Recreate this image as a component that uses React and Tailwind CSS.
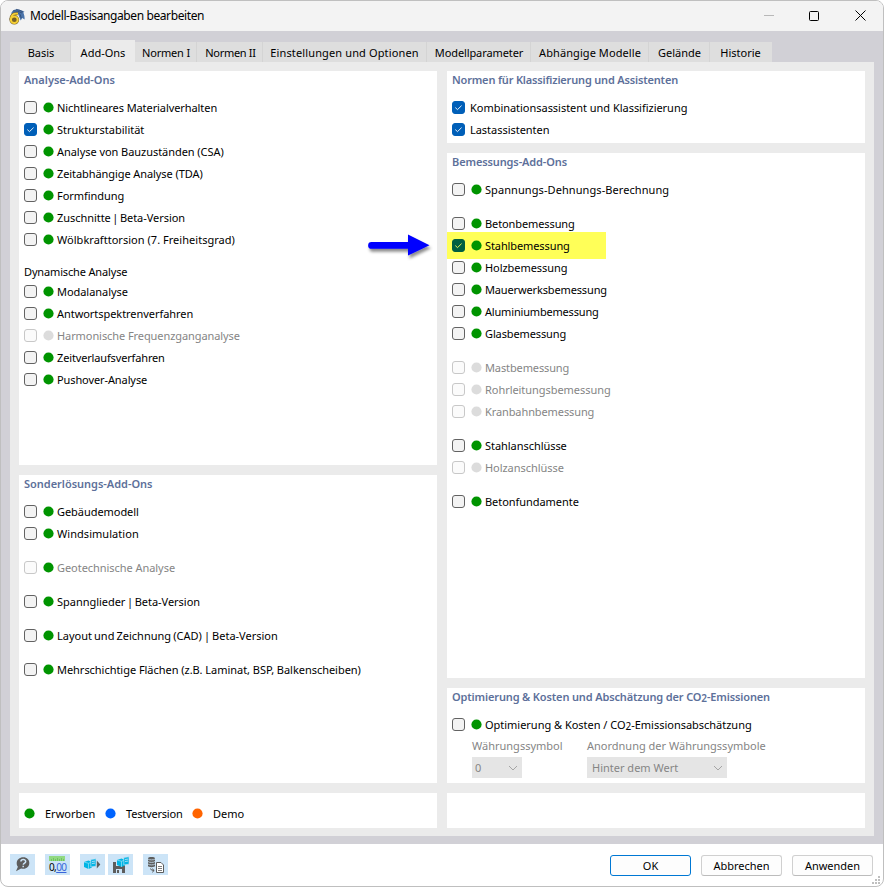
import React from "react";

const analysis = [
  { label: "Nichtlineares Materialverhalten", spacing: "tracking-[-0.08px]" },
  { label: "Strukturstabilität", checked: true, spacing: "tracking-[0px]" },
  { label: "Analyse von Bauzuständen (CSA)" },
  { label: "Zeitabhängige Analyse (TDA)", spacing: "tracking-[-0.08px]" },
  { label: "Formfindung" },
  { label: "Zuschnitte | Beta-Version", spacing: "tracking-[-0.05px] [word-spacing:-1.2px]" },
  { label: "Wölbkrafttorsion (7. Freiheitsgrad)", spacing: "tracking-[0.03px]" },
];

const dynamic = [
  { label: "Modalanalyse" },
  { label: "Antwortspektrenverfahren" },
  {
    label: "Harmonische Frequenzganganalyse",
    disabled: true,
    spacing: "tracking-[-0.08px]",
  },
  { label: "Zeitverlaufsverfahren", spacing: "tracking-[-0.15px]" },
  { label: "Pushover-Analyse", spacing: "tracking-[-0.1px]" },
];

const special = [
  { label: "Gebäudemodell" },
  { label: "Windsimulation", spacing: "tracking-[0.05px]" },
  { label: "Geotechnische Analyse", disabled: true, owned: true, gap: true },
  {
    label: "Spannglieder | Beta-Version",
    gap: true,
    spacing: "tracking-[-0.03px] [word-spacing:-1.2px]",
  },
  {
    label: "Layout und Zeichnung (CAD) | Beta-Version",
    gap: true,
    spacing: "tracking-[-0.01px] [word-spacing:-0.7px]",
  },
  {
    label: "Mehrschichtige Flächen (z.B. Laminat, BSP, Balkenscheiben)",
    gap: true,
    spacing: "tracking-[-0.035px]",
  },
];

const design = [
  { label: "Spannungs-Dehnungs-Berechnung", spacing: "tracking-[0.08px]" },
  { label: "Betonbemessung", gap: true, spacing: "tracking-[-0.1px]" },
  { label: "Stahlbemessung", checked: true, highlight: true, spacing: "tracking-[-0.1px]" },
  { label: "Holzbemessung" },
  { label: "Mauerwerksbemessung", spacing: "tracking-[-0.14px]" },
  { label: "Aluminiumbemessung", spacing: "tracking-[-0.18px]" },
  { label: "Glasbemessung", spacing: "tracking-[-0.12px]" },
  { label: "Mastbemessung", disabled: true, gap: true, spacing: "tracking-[-0.12px]" },
  { label: "Rohrleitungsbemessung", disabled: true },
  { label: "Kranbahnbemessung", disabled: true, spacing: "tracking-[-0.1px]" },
  { label: "Stahlanschlüsse", gap: true },
  { label: "Holzanschlüsse", disabled: true },
  { label: "Betonfundamente", gap: true },
];

const tabs = [
  { label: "Basis", width: "w-[61px] pl-[2px]" },
  { label: "Add-Ons", width: "w-[64px]", active: true },
  { label: "Normen I", width: "w-[62px] pl-px tracking-[-0.2px]" },
  { label: "Normen II", width: "w-[66px] pl-[2px] tracking-[-0.3px]" },
  { label: "Einstellungen und Optionen", width: "w-[164px] tracking-[0.13px]" },
  { label: "Modellparameter", width: "w-[104px] pl-px tracking-[-0.1px]" },
  { label: "Abhängige Modelle", width: "w-[118px] pl-px tracking-[0.08px]" },
  { label: "Gelände", width: "w-[61px] pl-px" },
  { label: "Historie", width: "w-[62px] border-r-0 pr-px" },
];

const Checkbox = ({ checked, disabled, highlight }) => {
  let color = "border-[#626262] bg-[#f3f3f3]";
  if (disabled) color = "border-[#c8c8c8] bg-[#fbfbfb]";
  if (checked) color = "border-[#005fb8] bg-[#005fb8]";
  if (highlight) color = "border-[#005f41] bg-[#005f41]";
  return (
    <span className={`block size-[13px] shrink-0 rounded-[3px] border ${color}`}>
      {checked && (
        <svg viewBox="0 0 11 11" className="block size-[11px]" fill="none">
          <path
            d="M2.3 5.6 4.5 7.6 8.600 3.600"
            stroke={highlight ? "#ffff58" : "#fff"}
            strokeWidth=".9"
          />
        </svg>
      )}
    </span>
  );
};

const Dot = ({ color = "#009400" }) => (
  <svg className="block size-[11px] shrink-0" viewBox="0 0 11 11">
    <circle cx="5.5" cy="5.5" r="5.1" fill={color} />
  </svg>
);

const AddOn = ({
  label,
  checked,
  disabled,
  owned,
  gap,
  highlight,
  spacing = "tracking-[-0.05px]",
}) => (
  <div className={`relative flex h-[22px] items-center pl-[5px] ${gap ? "mt-3" : ""}`}>
    {highlight && (
      <span className="absolute top-[-2px] left-0 h-[27px] w-[159px] bg-[#ffff58]" />
    )}
    <div className="relative flex items-center">
      <Checkbox checked={checked} disabled={disabled} highlight={highlight} />
      <span className="ml-[6px]">
        <Dot color={disabled && !owned ? "#dcdcdc" : "#009400"} />
      </span>
      <span
        className={`ml-[3px] pt-px whitespace-nowrap ${spacing} ${
          disabled ? "text-[#858585]" : ""
        }`}
      >
        {label}
      </span>
    </div>
    {highlight && (
      <svg className="absolute top-[-1px] left-[-82px] h-[36px] w-[68px]" viewBox="0 0 68 36">
        <defs>
          <filter id="arrowShadow" x="-20%" y="-20%" width="140%" height="160%">
            <feDropShadow dx="1.5" dy="3" stdDeviation="1.6" floodOpacity="0.45" />
          </filter>
        </defs>
        <path
          d="M6.5 9H43V1.5L64.500 12.200 43 22.500V15.800H6.500A3.400 3.400 0 0 1 6.500 9Z"
          fill="#0000ff"
          filter="url(#arrowShadow)"
        />
      </svg>
    )}
  </div>
);

const Panel = ({ title, className, spacing = "tracking-[-0.02px]", children }) => (
  <section className={`bg-white ${className}`}>
    {title && (
      <h2
        className={`h-[25px] pl-[5px] text-[11px] leading-[18px] font-semibold whitespace-nowrap text-[#5d709a] ${spacing}`}
      >
        {title}
      </h2>
    )}
    {children}
  </section>
);

const Select = ({ value, className }) => (
  <div
    className={`flex h-[21px] items-center justify-between bg-[#e5e5e5] pr-[4px] text-[#858585] ${className}`}
  >
    <span>{value}</span>
    <svg width="10" height="6" viewBox="0 0 10 6" fill="none" stroke="#a5a5a5">
      <path d="M1 1l4 4 4-4" />
    </svg>
  </div>
);

const Co2 = () => (
  <>
    CO<span className="relative top-px text-[10px]">2</span>
  </>
);

const ToolButton = ({ className = "", children }) => (
  <button className={`flex h-[21px] w-[25px] items-center justify-center bg-[#cce4f7] ${className}`}>
    {children}
  </button>
);

const HelpIcon = () => (
  <svg width="17" height="17" viewBox="0 0 17 17">
    <path
      d="M9.300 1.300C13 1.300 15.300 3.800 15.300 7s-2.300 5.800-6 5.800c-.8 0-1.500-.1-2.200-.4L2 15.300l1.900-4.600C3 9.700 2.700 8.600 2.700 7.300c0-3.500 2.900-6 6.600-6Z"
      fill="#5d5d5d"
    />
    <path
      d="M6.900 5.600C6.900 2.900 11.700 3 11.700 5.500 11.700 7.100 9.400 7 9.300 8.800M9.200 9.800v1.500"
      fill="none"
      stroke="#cce4f7"
      strokeWidth="1.500"
    />
  </svg>
);

const UnitsIcon = () => (
  <span className="flex w-[17px] flex-col">
    <svg width="16" height="5" viewBox="0 0 16 5">
      <path d="M0 0h16v5H0Z" fill="#91d982" />
      <path
        d="M2.500 3v2M4.500 2v3M6.500 3v2M8.500 2v3M10.500 3v2M12.500 2v3M14.500 3v2"
        stroke="#62b954"
        strokeWidth=".7"
      />
    </svg>
    <span className="flex font-['Noto_Sans',sans-serif] text-[10px] leading-[12px] tracking-[-0.6px] text-black">
      0,<span className="text-[#3865da] underline">00</span>
    </span>
  </span>
);

const Cube = () => (
  <>
    <path d="M0 4 4.500 2.500 8 4v5.500L4.500 11 0 9Z" fill="#00b5e5" />
    <path d="M0 4l4.500 1.300L8 4M4.500 5.300V11" fill="none" stroke="#9be2f7" strokeWidth=".7" />
    <path d="M6.800 1.500 12 .8v7.400l-5.200.8Z" fill="#00b5e5" stroke="#cce4f7" strokeWidth=".6" />
    <path d="M8 3.500l3-.4M8 5.500l3-.4" stroke="#cce4f7" strokeWidth=".8" />
  </>
);

const ExportIcon = () => (
  <svg width="17" height="17" viewBox="0 0 17 17">
    <g transform="translate(0 2)">
      <Cube />
    </g>
    <path d="M12.800 4.500 16.300 8.500 12.800 12.500Z" fill="#5d5d5d" />
  </svg>
);

const SaveIcon = () => (
  <svg width="18" height="18" viewBox="0 0 18 18">
    <path d="M1 6h10l2 2v9H1Z" fill="#5d5d5d" />
    <path d="M4 6h5v4H4ZM4 13h6v4H4Z" fill="#cce4f7" />
    <path d="M5 14h2v3H5Z" fill="#5d5d5d" />
    <g transform="translate(5 0)">
      <Cube />
    </g>
  </svg>
);

const DatabaseIcon = () => (
  <svg width="18" height="18" viewBox="0 0 18 18">
    <path d="M1 2c0-1.500 7-1.500 7 0v8c0 1.500-7 1.500-7 0Z" fill="#5d5d5d" />
    <path
      d="M1 3c1 1.200 6 1.200 7 0M1 5.500c1 1.200 6 1.200 7 0M1 8c1 1.200 6 1.200 7 0"
      fill="none"
      stroke="#cce4f7"
      strokeWidth=".8"
    />
    <path
      d="M3.500 12.500q0 2 3.500 2M5.200 12.700 7.200 14.500 5.200 16.300"
      fill="none"
      stroke="#5d5d5d"
    />
    <path d="M9.500 6.500h4.500l2.500 2.500v7.500h-7Z" fill="#fff" stroke="#5d5d5d" />
    <path d="M11 10.500h4M11 12.500h4M11 14.500h4" stroke="#5d5d5d" strokeWidth=".8" />
  </svg>
);

const AppIcon = () => (
  <svg width="17" height="17" viewBox="0 0 17 17">
    <path
      d="M3.500 4.500C6 .3 10.500.2 16.500 3.800l-1.200.8c1 2.200 1.500 4.600 1.300 7l-2.300-1.500-1.600 2.400L10 6 6 5.500 3.500 8Z"
      fill="#4b74aa"
    />
    <path
      d="M5 2.800Q10 2.500 14 5M10 4.500q3 2 3.200 5.500M8 1.300Q12 2 15 4"
      stroke="#2c4368"
      fill="none"
      strokeWidth=".7"
    />
    <path d="M10 5.800Q3 4.800 2.900 11.500" fill="none" stroke="#75612a" strokeWidth="3" />
    <ellipse cx="6.300" cy="11.800" rx="3.400" ry="3.200" fill="#75612a" stroke="#75612a" strokeWidth="3" />
    <path d="M10 5.800Q3 4.800 2.900 11.500" fill="none" stroke="#f5cf34" strokeWidth="1.900" />
    <ellipse cx="6.300" cy="11.800" rx="3.400" ry="3.200" fill="none" stroke="#f5cf34" strokeWidth="2" />
  </svg>
);

const App = () => {
  return (
    <div className="flex h-[887px] w-[884px] flex-col overflow-hidden rounded-[8px] border border-[#bfbfbf] bg-white font-['Noto_Sans','Open_Sans',sans-serif] text-[11px] leading-[16px] text-black">
      <header className="flex h-[30px] shrink-0 items-center bg-[#f3f3f3] pr-[17px] pl-[7px]">
        <AppIcon />
        <h1 className="ml-[5px] text-[12px] tracking-[-0.4px]">Modell-Basisangaben bearbeiten</h1>
        <div className="ml-auto flex items-center pb-px">
          <svg width="10" height="11" viewBox="0 0 10 11" className="mr-[35px]">
            <path d="M0 5.500h10" stroke="#b8b8b8" />
          </svg>
          <svg width="10" height="10" viewBox="0 0 10 10" className="mr-[36px]">
            <rect x=".5" y=".5" width="9" height="9" rx="1" fill="none" stroke="#000" />
          </svg>
          <svg width="11" height="11" viewBox="0 0 11 11">
            <path d="M.5.5l10 10M10.500.5l-10 10" stroke="#000" />
          </svg>
        </div>
      </header>

      <main className="flex h-[813px] shrink-0 flex-col bg-[#d1d0d6] px-[9px] pt-[9px] pb-[8px]">
        <nav className="flex h-[22px] shrink-0 items-end">
          {tabs.map((tab) => (
            <button
              key={tab.label}
              className={`flex shrink-0 items-center justify-center whitespace-nowrap ${
                tab.active
                  ? "h-[22px] bg-[#ebebeb] pt-[3px]"
                  : "h-[20px] border-r border-[#d4d4d4] bg-[#dedede] pt-px"
              } ${tab.width}`}
            >
              {tab.label}
            </button>
          ))}
        </nav>

        <div className="flex grow gap-[10px] bg-[#ebebeb] px-[9px] pt-[9px] pb-[8px]">
          <div className="flex w-[418px] flex-col gap-[10px]">
            <Panel title="Analyse-Add-Ons" className="h-[394px]">
              {analysis.map((item) => (
                <AddOn key={item.label} {...item} />
              ))}
              <h3 className="h-[30px] pt-[14px] pl-[5px] tracking-[-0.15px]">Dynamische Analyse</h3>
              {dynamic.map((item) => (
                <AddOn key={item.label} {...item} />
              ))}
            </Panel>
            <Panel title="Sonderlösungs-Add-Ons" className="h-[308px]">
              {special.map((item) => (
                <AddOn key={item.label} {...item} />
              ))}
            </Panel>
            <Panel className="flex h-[35px] items-center pt-[6px] pl-[5px]">
              <Dot />
              <span className="ml-[10px] w-[50px]">Erworben</span>
              <span className="ml-[10px]">
                <Dot color="#0064ff" />
              </span>
              <span className="ml-[10px] w-[57px] tracking-[-0.2px]">Testversion</span>
              <span className="ml-[9px]">
                <Dot color="#ff6400" />
              </span>
              <span className="ml-[10px]">Demo</span>
            </Panel>
          </div>

          <div className="flex w-[418px] flex-col gap-[10px]">
            <Panel
              title="Normen für Klassifizierung und Assistenten"
              className="h-[72px]"
              spacing="tracking-[-0.18px]"
            >
              {["Kombinationsassistent und Klassifizierung", "Lastassistenten"].map((label) => (
                <div key={label} className="flex h-[22px] items-center pl-[5px]">
                  <Checkbox checked />
                  <span className="ml-[5px] pt-px tracking-[-0.03px]">{label}</span>
                </div>
              ))}
            </Panel>
            <Panel
              title="Bemessungs-Add-Ons"
              className="h-[525px]"
              spacing="tracking-[-0.12px]"
            >
              {design.map((item) => (
                <AddOn key={item.label} {...item} />
              ))}
            </Panel>
            <Panel
              title={
                <>
                  Optimierung &amp; Kosten und Abschätzung der <Co2 />
                  -Emissionen
                </>
              }
              className="h-[95px]"
              spacing="tracking-[-0.14px]"
            >
              <AddOn
                label={
                  <>
                    Optimierung &amp; Kosten / <Co2 />
                    -Emissionsabschätzung
                  </>
                }
                spacing="tracking-[-0.02px]"
              />
              <div className="flex pt-[3px] pl-[25px] text-[#858585]">
                <div className="w-[115px]">
                  <div className="h-[19px]">Währungssymbol</div>
                  <Select value="0" className="w-[50px] pl-[3px]" />
                </div>
                <div>
                  <div className="h-[19px]">Anordnung der Währungssymbole</div>
                  <Select value="Hinter dem Wert" className="w-[140px] pl-[5px]" />
                </div>
              </div>
            </Panel>
            <Panel className="h-[35px]" />
          </div>
        </div>
      </main>

      <footer className="relative flex grow items-start pt-[10px] pr-[10px] pl-[9px]">
        <ToolButton>
          <HelpIcon />
        </ToolButton>
        <ToolButton className="ml-[10px]">
          <UnitsIcon />
        </ToolButton>
        <ToolButton className="ml-[10px]">
          <ExportIcon />
        </ToolButton>
        <ToolButton className="ml-[3px]">
          <SaveIcon />
        </ToolButton>
        <ToolButton className="ml-[10px]">
          <DatabaseIcon />
        </ToolButton>
        <div className="ml-auto flex gap-[10px] pt-px">
          <button className="h-[21px] w-[81px] rounded-[3px] border border-[#0078d4] bg-[#fdfdfd]">
            OK
          </button>
          <button className="h-[21px] w-[81px] rounded-[3px] border border-[#d0d0d0] border-b-[#bcbcbc] bg-[#fdfdfd]">
            Abbrechen
          </button>
          <button className="h-[21px] w-[81px] rounded-[3px] border border-[#d0d0d0] border-b-[#bcbcbc] bg-[#fdfdfd]">
            Anwenden
          </button>
        </div>
        <svg
          className="absolute right-[3px] bottom-[2px]"
          width="8"
          height="8"
          viewBox="0 0 8 8"
          fill="#bfbfbf"
        >
          <path d="M6 0h2v2H6ZM3 3h2v2H3ZM6 3h2v2H6ZM0 6h2v2H0ZM3 6h2v2H3ZM6 6h2v2H6Z" />
        </svg>
      </footer>
    </div>
  );
};

export default App;
